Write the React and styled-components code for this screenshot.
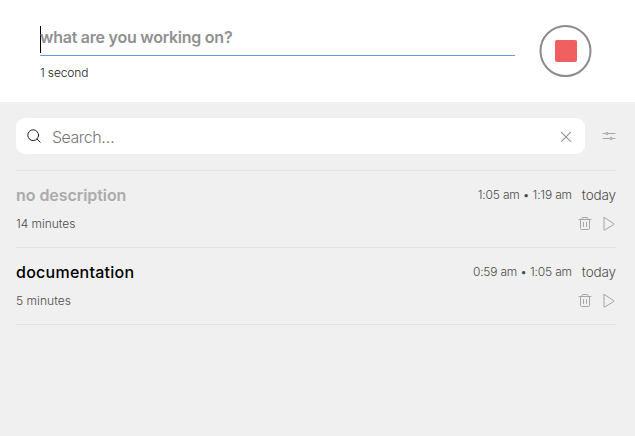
import React from "react";
import styled, { createGlobalStyle } from "styled-components";

const GlobalStyle = createGlobalStyle`
  * { box-sizing: border-box; }
  body {
    margin: 0;
    background: #f0f0f0;
    font-family: Inter, "Liberation Sans", sans-serif;
  }
`;

const Page = styled.main`
  width: 100%;
  min-height: 100vh;
  background: #f0f0f0;
`;

const Tracker = styled.header`
  display: flex;
  gap: 24px;
  height: 102px;
  padding: 25px 43px 0 40px;
  background: #fff;
`;

const Task = styled.div`
  flex: 1;
`;

const TaskField = styled.div`
  display: flex;
  align-items: center;
  height: 31px;
  padding: 0 0 6px;
  border-bottom: 1px solid #6c9ade;
`;

const Caret = styled.span`
  width: 1px;
  height: 27px;
  margin-top: 4px;
  margin-right: -1px;
  background: #000;
`;

const Text = styled.span`
  font-size: ${(p) => p.$size}px;
  font-weight: ${(p) => p.$weight || 300};
  letter-spacing: ${(p) => p.$track || 0}px;
  color: ${(p) => p.$color};
  line-height: 20px;
  white-space: pre;
`;

const Elapsed = styled.div`
  display: flex;
  margin-top: 7px;
`;

const StopButton = styled.button`
  display: grid;
  place-items: center;
  width: 53px;
  height: 52px;
  padding: 0;
  border: 0;
  background: none;
`;

const Content = styled.section`
  padding: 16px 19px 0 16px;
`;

const SearchRow = styled.div`
  display: flex;
  align-items: center;
  gap: 16px;
  margin-right: -1px;
  margin-bottom: 16px;
`;

const SearchBox = styled.div`
  display: flex;
  align-items: center;
  width: 569px;
  height: 36px;
  padding: 0 11px 0 10px;
  border-radius: 9px;
  background: #fff;
`;

const SearchLabel = styled.div`
  display: flex;
  flex: 1;
  padding: 2px 0 0 10px;
`;

const Icon = styled.svg`
  display: block;
  flex: none;
  fill: none;
  stroke: ${(p) => p.$color || "#a6a6a6"};
  stroke-width: ${(p) => p.$stroke || 1};
  stroke-linecap: round;
  stroke-linejoin: round;
`;

const Entries = styled.div`
  border-top: 1px solid #e4e4e4;
`;

const Entry = styled.article`
  display: flex;
  flex-direction: column;
  height: 77px;
  padding-top: 14px;
  border-bottom: 1px solid #e4e4e4;
`;

const EntryLine = styled.div`
  display: flex;
  align-items: center;
  justify-content: space-between;
  height: ${(p) => p.$height}px;
`;

const Title = styled(Text)`
  margin-top: -2px;
`;

const When = styled.div`
  display: flex;
  gap: 10px;
  align-items: center;
  margin-top: -1px;
`;

const Actions = styled.div`
  display: flex;
  gap: 8px;
  margin-right: -1px;
`;

const entries = [
  { title: "no description", empty: true, titleTrack: -0.06, duration: "14 minutes", durationTrack: -0.03, time: "1:05 am • 1:19 am", timeTrack: -0.18 },
  { title: "documentation", titleTrack: 0.26, duration: "5 minutes", durationTrack: 0.05, time: "0:59 am • 1:05 am", timeTrack: -0.19 },
];

function TrashIcon() {
  return (
    <Icon width="16" height="16" viewBox="0 0 16 16">
      <path d="M2 3.5h12M5 3.3V2.5q0-1 1-1h4q1 0 1 1v.8M3.5 3.5v9q0 1 1 1h7q1 0 1-1v-9M6.5 6.5v4M9.5 6.5v4" />
    </Icon>
  );
}

function PlayIcon() {
  return (
    <Icon width="16" height="16" viewBox="0 0 16 16">
      <path d="M3 1.7v12.2q0 .5.5.2l9.3-5.6q.5-.4 0-.8L3.5 1.6q-.5-.3-.5.1z" />
    </Icon>
  );
}

export default function App() {
  return (
    <>
      <GlobalStyle />
      <Page>
        <Tracker>
          <Task>
            <TaskField>
              <Caret />
              <Text $size={16} $weight={600} $track={-0.25} $color="#909090">what are you working on?</Text>
            </TaskField>
            <Elapsed>
              <Text $size={12} $track={-0.12} $color="#222">1 second</Text>
            </Elapsed>
          </Task>
          <StopButton aria-label="Stop">
            <Icon width="53" height="52" viewBox="0 0 53 52" $color="#8b8b8b" $stroke={2}>
              <circle cx="26.5" cy="26" r="25" />
              <rect x="16" y="15" width="22" height="22" rx="2" fill="#f16060" stroke="none" />
            </Icon>
          </StopButton>
        </Tracker>
        <Content>
          <SearchRow>
            <SearchBox>
              <Icon width="16" height="16" viewBox="0 0 16 16" $color="#222">
                <circle cx="7.2" cy="7.2" r="5.4" />
                <path d="M11.1 11.1l3.1 3.1" />
              </Icon>
              <SearchLabel>
                <Text $size={16} $track={-0.5} $color="#777">Search…</Text>
              </SearchLabel>
              <Icon width="16" height="16" viewBox="0 0 16 16" $color="#929292" $stroke={1.1}>
                <path d="M3.5 4.3l9 9M12.5 4.3l-9 9" />
              </Icon>
            </SearchBox>
            <Icon width="16" height="16" viewBox="0 0 16 16">
              <path d="M2 5.5h2.8M7.2 5.5H14M2 10.5h6.8M11.2 10.5H14" />
              <circle cx="6" cy="5.5" r="1.2" />
              <circle cx="10" cy="10.5" r="1.2" />
            </Icon>
          </SearchRow>
          <Entries>
            {entries.map((e) => (
              <Entry key={e.title}>
                <EntryLine $height={21}>
                  <Title $size={16} $weight={e.empty ? 600 : 500} $track={e.titleTrack} $color={e.empty ? "#ababab" : "#000"}>{e.title}</Title>
                  <When>
                    <Text $size={12} $track={e.timeTrack} $color="#4c4c4c">{e.time}</Text>
                    <Text $size={13.5} $track={-0.12} $color="#4c4c4c">today</Text>
                  </When>
                </EntryLine>
                <EntryLine $height={35}>
                  <Text $size={12} $track={e.durationTrack} $color="#4c4c4c">{e.duration}</Text>
                  <Actions>
                    <TrashIcon />
                    <PlayIcon />
                  </Actions>
                </EntryLine>
              </Entry>
            ))}
          </Entries>
        </Content>
      </Page>
    </>
  );
}
